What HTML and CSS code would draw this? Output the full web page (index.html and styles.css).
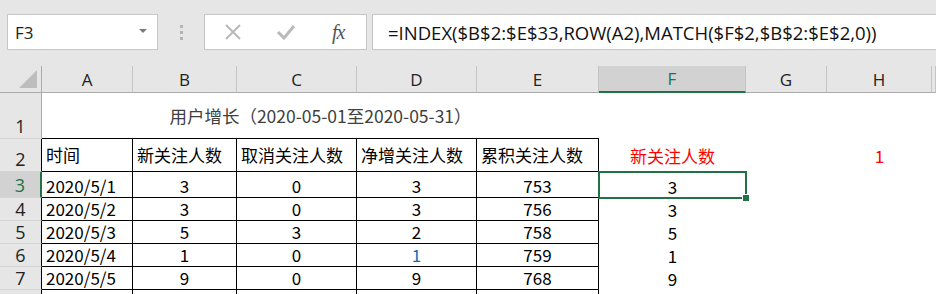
FILE: index.html
```html
<!DOCTYPE html>
<html>
  <head>
    <meta charset="utf-8" />
    <title>用户增长</title>
    <link rel="stylesheet" href="styles.css">
  </head>
  <body>
    <div class="toolbar">
      <div class="namebox">
        <span>F3</span>
        <span class="caret"></span>
      </div>
      <div class="grip"><i></i><i></i><i></i></div>
      <div class="fxbox">
        <svg class="icon" width="20" height="20" viewBox="0 0 20 20">
          <path d="M3 3 L17 17 M17 3 L3 17" stroke="#b9b9b9" stroke-width="2" fill="none" />
        </svg>
        <svg class="icon" width="20" height="20" viewBox="0 0 20 20">
          <path d="M2 10 L8 16 L18 4" stroke="#b9b9b9" stroke-width="3" fill="none" />
        </svg>
        <span class="fx">fx</span>
      </div>
      <div class="formula">=INDEX($B$2:$E$33,ROW(A2),MATCH($F$2,$B$2:$E$2,0))</div>
    </div>

    <div class="sheet">
      <!-- column headers -->
      <div class="ch corner">
        <svg width="20" height="20" viewBox="0 0 20 20"><polygon points="19,1 19,19 1,19" fill="#bdbdbd" /></svg>
      </div>
      <div class="ch">A</div>
      <div class="ch">B</div>
      <div class="ch">C</div>
      <div class="ch">D</div>
      <div class="ch">E</div>
      <div class="ch sel">F</div>
      <div class="ch">G</div>
      <div class="ch">H</div>
      <div class="ch"></div>

      <!-- row 1 -->
      <div class="rh rh-top">1</div>
      <div class="title">用户增长（2020-05-01至2020-05-31）</div>
      <div class="c"></div><div class="c"></div><div class="c"></div><div class="c"></div>

      <!-- row 2 -->
      <div class="rh rh-tbl rh-low">2</div>
      <div class="c b left head">时间</div>
      <div class="c b left head">新关注人数</div>
      <div class="c b left head">取消关注人数</div>
      <div class="c b left head">净增关注人数</div>
      <div class="c b left head">累积关注人数</div>
      <div class="c mid head red">新关注人数</div>
      <div class="c"></div>
      <div class="c mid head red">1</div>
      <div class="c"></div>

      <!-- row 3 -->
      <div class="rh rh-tbl rh-sel">3</div>
      <div class="c b left">2020/5/1</div>
      <div class="c b mid">3</div>
      <div class="c b mid">0</div>
      <div class="c b mid">3</div>
      <div class="c b mid">753</div>
      <div class="c mid active">3<span class="handle"></span></div>
      <div class="c"></div><div class="c"></div><div class="c"></div>

      <!-- row 4 -->
      <div class="rh rh-tbl">4</div>
      <div class="c b left">2020/5/2</div>
      <div class="c b mid">3</div>
      <div class="c b mid">0</div>
      <div class="c b mid">3</div>
      <div class="c b mid">756</div>
      <div class="c mid">3</div>
      <div class="c"></div><div class="c"></div><div class="c"></div>

      <!-- row 5 -->
      <div class="rh rh-tbl">5</div>
      <div class="c b left">2020/5/3</div>
      <div class="c b mid">5</div>
      <div class="c b mid">3</div>
      <div class="c b mid">2</div>
      <div class="c b mid">758</div>
      <div class="c mid">5</div>
      <div class="c"></div><div class="c"></div><div class="c"></div>

      <!-- row 6 -->
      <div class="rh rh-tbl">6</div>
      <div class="c b left">2020/5/4</div>
      <div class="c b mid">1</div>
      <div class="c b mid">0</div>
      <div class="c b mid blue">1</div>
      <div class="c b mid">759</div>
      <div class="c mid">1</div>
      <div class="c"></div><div class="c"></div><div class="c"></div>

      <!-- row 7 -->
      <div class="rh rh-tbl">7</div>
      <div class="c b left">2020/5/5</div>
      <div class="c b mid">9</div>
      <div class="c b mid">0</div>
      <div class="c b mid">9</div>
      <div class="c b mid">768</div>
      <div class="c mid">9</div>
      <div class="c"></div><div class="c"></div><div class="c"></div>

      <!-- row 8, cut off by the window -->
      <div class="rh rh-tbl"></div>
      <div class="c b"></div><div class="c b"></div><div class="c b"></div><div class="c b"></div><div class="c b"></div>
      <div class="c"></div><div class="c"></div><div class="c"></div><div class="c"></div>
    </div>
  </body>
</html>
```

FILE: styles.css
```css
body {
  margin: 0;
  width: 936px;
  height: 294px;
  overflow: hidden;
  background: #ffffff;
  font-family: "Noto Sans CJK SC", "Liberation Sans", sans-serif;
  color: #000;
}

/* formula bar */
.toolbar {
  height: 66px;
  background: #e6e6e6;
  display: flex;
  align-items: flex-start;
  padding-top: 14px;
  box-sizing: border-box;
}

.namebox {
  margin-left: 7px;
  width: 151px;
  height: 36px;
  box-sizing: border-box;
  background: #fff;
  border: 1px solid #c6c6c6;
  display: flex;
  align-items: center;
  justify-content: space-between;
  padding: 0 10px 0 7px;
  font-family: "Open Sans", "Liberation Sans", sans-serif;
  font-size: 17px;
  color: #222;
}

.caret {
  width: 0;
  height: 0;
  border-left: 4px solid transparent;
  border-right: 4px solid transparent;
  border-top: 4px solid #7a7a7a;
  margin-top: -2px;
}

.grip {
  width: 46px;
  height: 36px;
  display: flex;
  flex-direction: column;
  align-items: center;
  justify-content: center;
  gap: 3px;
}

.grip i {
  width: 3px;
  height: 3px;
  background: #b4b4b4;
}

.fxbox {
  width: 163px;
  height: 36px;
  box-sizing: border-box;
  background: #fff;
  border: 1px solid #c6c6c6;
  display: flex;
  align-items: center;
  padding-left: 18px;
  gap: 33px;
}

.fx {
  font-family: "Liberation Serif", serif;
  font-style: italic;
  font-size: 20px;
  color: #555;
  letter-spacing: -1px;
  margin-left: 3px;
}

.formula {
  margin-left: 5px;
  flex: 1;
  height: 36px;
  box-sizing: border-box;
  background: #fff;
  border: 1px solid #c6c6c6;
  border-right: none;
  display: flex;
  align-items: center;
  padding-left: 15px;
  font-family: "Open Sans", "Liberation Sans", sans-serif;
  font-size: 18.5px;
  color: #111;
  white-space: nowrap;
}

/* sheet grid */
.sheet {
  display: grid;
  grid-template-columns: 42px 91px 104px 120px 120px 122px 147px 81px 105px 1fr;
  grid-template-rows: 27px 46px 33px 26px 23px 23px 23px 23px 10px;
}

.ch {
  background: #e6e6e6;
  border-right: 1px solid #c4c4c4;
  border-bottom: 1px solid #ababab;
  box-sizing: border-box;
  display: flex;
  align-items: center;
  justify-content: center;
  font-family: "Open Sans", "Liberation Sans", sans-serif;
  font-size: 17px;
  color: #222;
}

.ch.corner {
  justify-content: flex-end;
  align-items: flex-end;
  padding: 0 3px 3px 0;
  border-right-color: #ababab;
}

.ch.sel {
  background: #d2d2d2;
  color: #217346;
  border-bottom: 2px solid #217346;
}

.rh {
  background: #e6e6e6;
  border-right: 1px solid #ababab;
  border-bottom: 1px solid #d4d4d4;
  box-sizing: border-box;
  display: flex;
  align-items: center;
  justify-content: center;
  font-family: "Open Sans", "Liberation Sans", sans-serif;
  font-size: 18px;
  color: #222;
}

.rh-top,
.rh-low {
  align-items: flex-end;
}

.rh-tbl {
  border-right-color: #000;
}

.rh-sel {
  background: #d2d2d2;
  color: #217346;
  border-right: 2px solid #217346;
}

.c {
  box-sizing: border-box;
  display: flex;
  align-items: flex-end;
  font-size: 17px;
  line-height: 22px;
  white-space: nowrap;
  position: relative;
}

.c.b {
  border-right: 1px solid #000;
  border-bottom: 1px solid #000;
}

.c.left {
  padding-left: 4px;
}

.c.mid {
  justify-content: center;
}

.c.head {
  padding-bottom: 5px;
}

.title {
  grid-column: 2 / 7;
  border-bottom: 1px solid #000;
  box-sizing: border-box;
  display: flex;
  justify-content: center;
  align-items: flex-end;
  padding-bottom: 10px;
  font-size: 17.5px;
  color: #404040;
}

.red {
  color: #ff0000;
}

.blue {
  color: #0070c0;
}

.active {
  outline: 2px solid #217346;
  outline-offset: -1px;
  z-index: 1;
}

.handle {
  position: absolute;
  right: -4px;
  bottom: -4px;
  width: 6px;
  height: 6px;
  background: #217346;
  border: 1px solid #fff;
}
```
